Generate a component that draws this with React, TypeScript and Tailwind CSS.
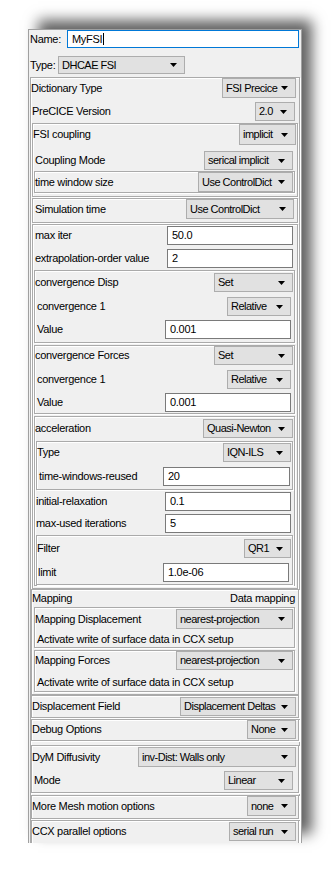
import React from "react";

/**
 * FSI settings panel — static recreation of a Qt property form.
 * Nested etched frames, combo boxes and line edits.
 */

const FRAME = "border border-[#aaaaaa] shadow-[inset_1px_1px_0_#ffffff,1px_1px_0_#ffffff]";

function Arrow() {
  return (
    <svg width="7" height="4" viewBox="0 0 7 4" className="absolute right-[7px] top-1/2 -translate-y-1/2">
      <polygon points="0,0 7,0 3.5,4" fill="#000" />
    </svg>
  );
}

function Combo({ text, className = "" }: { text: string; className?: string }) {
  return (
    <div className={`relative flex h-full shrink-0 items-center overflow-hidden border border-[#adadad] bg-[#e1e1e1] pl-[3px] tracking-[-0.5px] ${className}`}>
      <span className="whitespace-nowrap">{text}</span>
      <Arrow />
    </div>
  );
}

function Field({ value, className = "" }: { value: string; className?: string }) {
  return (
    <div className={`flex h-full shrink-0 items-center border border-[#7a7a7a] bg-white pl-[4px] ${className}`}>
      <span className="whitespace-nowrap">{value}</span>
    </div>
  );
}

function Row({ label, children, className = "" }: { label: string; children: React.ReactNode; className?: string }) {
  return (
    <div className={`flex items-center justify-between ${className}`}>
      <span className="whitespace-nowrap">{label}</span>
      {children}
    </div>
  );
}

export default function App() {
  return (
    <div className="h-[873px] w-[332px] overflow-hidden bg-white pl-[28px] pt-[29px] font-['Liberation_Sans',Arial,sans-serif] text-[11px] leading-none tracking-[-0.3px] text-black">
      <div className="h-[814px] w-[274px] overflow-hidden border-x border-t border-[#a0a0a0] bg-[#f0f0f0] shadow-[10px_-9px_13px_rgba(0,0,0,0.62)]">
        {/* name */}
        <div className="flex h-[18px] items-center">
          <span className="w-[38px] pl-px">Name:</span>
          <div className="flex h-full w-[232px] items-center border border-[#0078d7] bg-white pl-[4px]">
            <span>MyFSI</span>
            <span className="ml-px h-[12px] w-px bg-black" />
          </div>
        </div>

        {/* type */}
        <div className="mt-[8px] flex h-[18px] items-center">
          <span className="w-[29px] pl-px">Type:</span>
          <Combo text="DHCAE FSI" className="w-[127px]" />
        </div>

        <div className={`mx-px mt-[3px] ${FRAME}`}>
          <Row label="Dictionary Type" className="h-[20px] pr-[3px]">
            <Combo text="FSI Precice" className="w-[74px]" />
          </Row>
          <Row label="PreCICE Version" className="mt-[4px] h-[19px] pl-px pr-[4px]">
            <Combo text="2.0" className="w-[40px]" />
          </Row>

          {/* coupling */}
          <div className={`mx-px mt-[2px] pb-[3px] ${FRAME}`}>
            <Row label="FSI coupling" className="h-[21px] pr-px">
              <Combo text="implicit" className="w-[57px]" />
            </Row>
            <Row label="Coupling Mode" className="mt-[6px] h-[19px] pl-[2px] pr-[4px]">
              <Combo text="serical implicit" className="w-[89px]" />
            </Row>
            <div className={`ml-px mr-[2px] mt-px ${FRAME}`}>
              <Row label="time window size" className="h-[20px] pr-px">
                <Combo text="Use ControlDict" className="w-[95px]" />
              </Row>
            </div>
          </div>

          <div className={`mx-px mt-px pb-[3px] ${FRAME}`}>
            <Row label="Simulation time" className="h-[20px] pl-[2px] pr-[3px]">
              <Combo text="Use ControlDict" className="w-[108px]" />
            </Row>
          </div>

          {/* convergence + acceleration */}
          <div className={`mx-px mt-px pb-[2px] ${FRAME}`}>
            <Row label="max iter" className="mt-px h-[19px] pl-[2px] pr-[4px]">
              <Field value="50.0" className="w-[126px]" />
            </Row>
            <Row label="extrapolation-order value" className="mt-[4px] h-[19px] pl-[2px] pr-[4px]">
              <Field value="2" className="w-[126px]" />
            </Row>

            <div className={`ml-px mr-[2px] mt-[2px] pb-[3px] ${FRAME}`}>
              <Row label="convergence Disp" className="mt-[2px] h-[19px] pr-px">
                <Combo text="Set" className="w-[79px]" />
              </Row>
              <Row label="convergence 1" className="mt-[5px] h-[19px] pl-[2px] pr-[3px]">
                <Combo text="Relative" className="w-[64px]" />
              </Row>
              <Row label="Value" className="mt-[4px] h-[19px] pl-[2px] pr-[3px]">
                <Field value="0.001" className="w-[126px]" />
              </Row>
            </div>

            <div className={`ml-px mr-[2px] mt-[2px] pb-px ${FRAME}`}>
              <Row label="convergence Forces" className="h-[19px] pr-px">
                <Combo text="Set" className="w-[79px]" />
              </Row>
              <Row label="convergence 1" className="mt-[5px] h-[19px] pl-[2px] pr-[3px]">
                <Combo text="Relative" className="w-[64px]" />
              </Row>
              <Row label="Value" className="mt-[4px] h-[19px] pl-[2px] pr-[3px]">
                <Field value="0.001" className="w-[126px]" />
              </Row>
            </div>

            <div className={`ml-px mr-[2px] mt-[2px] ${FRAME}`}>
              <Row label="acceleration" className="mt-[2px] h-[19px] pr-px">
                <Combo text="Quasi-Newton" className="w-[90px]" />
              </Row>
              <div className={`mx-px mt-[3px] pb-[3px] ${FRAME}`}>
                <Row label="Type" className="mt-px h-[19px] pr-px">
                  <Combo text="IQN-ILS" className="w-[68px]" />
                </Row>
                <Row label="time-windows-reused" className="mt-[5px] h-[19px] pl-[2px] pr-[2px]">
                  <Field value="20" className="w-[127px]" />
                </Row>
              </div>
              <Row label="initial-relaxation" className="mt-[2px] h-[19px] pl-px pr-[3px]">
                <Field value="0.1" className="w-[126px]" />
              </Row>
              <Row label="max-used iterations" className="mt-[3px] h-[19px] pl-px pr-[3px]">
                <Field value="5" className="w-[126px]" />
              </Row>
              <div className={`mx-px mt-[2px] pb-[2px] ${FRAME}`}>
                <Row label="Filter" className="mt-[3px] h-[19px] pr-px">
                  <Combo text="QR1" className="w-[47px]" />
                </Row>
                <Row label="limit" className="mt-[5px] h-[19px] pl-px pr-[3px]">
                  <Field value="1.0e-06" className="w-[126px]" />
                </Row>
              </div>
            </div>
          </div>

          {/* mapping */}
          <div className={`pb-[2px] ${FRAME}`}>
            <Row label="Mapping" className="h-[17px] pr-[3px]">
              <span>Data mapping</span>
            </Row>
            <div className={`ml-[2px] mr-[3px] ${FRAME}`}>
              <Row label="Mapping Displacement" className="mt-px h-[20px] pr-px">
                <Combo text="nearest-projection" className="w-[117px]" />
              </Row>
              <div className="mt-[2px] flex h-[16px] items-center pl-[2px]">Activate write of surface data in CCX setup</div>
            </div>
            <div className={`ml-[2px] mr-[3px] mt-[2px] pb-px ${FRAME}`}>
              <Row label="Mapping Forces" className="h-[19px] pr-px">
                <Combo text="nearest-projection" className="w-[117px]" />
              </Row>
              <div className="mt-[4px] flex h-[16px] items-center pl-[2px]">Activate write of surface data in CCX setup</div>
            </div>
          </div>

          <div className={`pb-px ${FRAME}`}>
            <Row label="Displacement Field" className="mt-px h-[19px] pr-[2px]">
              <Combo text="Displacement Deltas" className="w-[116px]" />
            </Row>
          </div>

          <div className={`mt-px pb-px ${FRAME}`}>
            <Row label="Debug Options" className="h-[19px] pr-[2px]">
              <Combo text="None" className="w-[49px]" />
            </Row>
          </div>

          <div className={`mt-[4px] pb-[2px] ${FRAME}`}>
            <Row label="DyM Diffusivity" className="mt-px h-[20px] pr-[2px]">
              <Combo text="inv-Dist: Walls only" className="w-[158px]" />
            </Row>
            <Row label="Mode" className="mt-[4px] h-[19px] pl-[2px] pr-[5px]">
              <Combo text="Linear" className="w-[69px]" />
            </Row>
          </div>

          <div className={`mt-[2px] pb-[2px] ${FRAME}`}>
            <Row label="More Mesh motion options" className="h-[20px] pr-[2px]">
              <Combo text="none" className="w-[49px]" />
            </Row>
          </div>

          <div className={`mt-px pb-[20px] ${FRAME}`}>
            <Row label="CCX parallel options" className="mt-px h-[19px] pr-[2px]">
              <Combo text="serial run" className="w-[67px]" />
            </Row>
          </div>
        </div>
      </div>
    </div>
  );
}
